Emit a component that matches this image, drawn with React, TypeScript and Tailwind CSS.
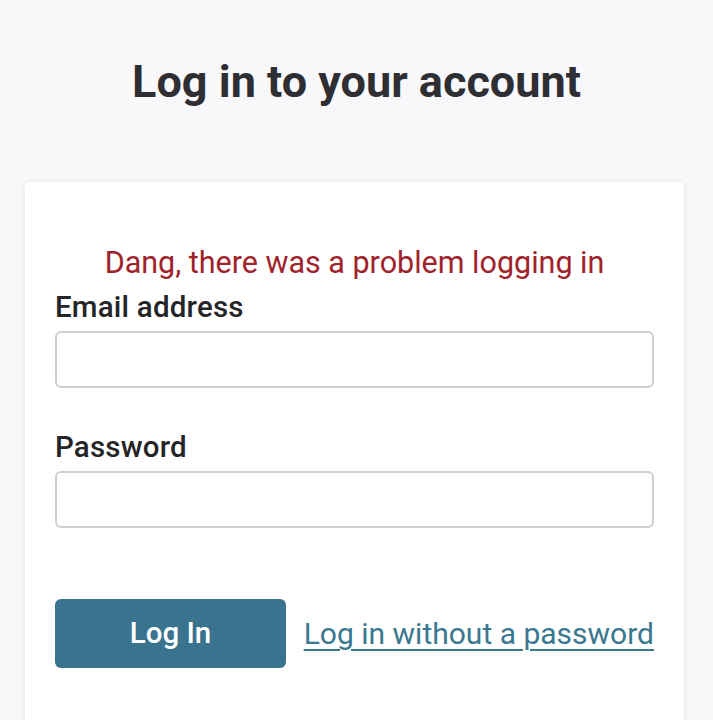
import { useState } from 'react';

export default function App() {
  const [email, setEmail] = useState('');
  const [password, setPassword] = useState('');

  return (
    <div className="min-h-screen bg-[#f8f8fb] font-['Roboto',_'Liberation_Sans',_sans-serif]">
      {/* Page title */}
      <h1 className="pt-[55px] text-center text-[45px] leading-[54px] font-bold text-[#2f2f33]">
        Log in to your account
      </h1>

      {/* Login card */}
      <div className="ml-[25px] mr-[29px] mt-[73px] bg-white rounded-[4px] shadow-[0_0_6px_rgba(0,0,0,0.08)] px-[30px] pt-[63px] pb-[60px]">
        <p className="text-center text-[30.5px] leading-[36px] text-[#a0232c]">
          Dang, there was a problem logging in
        </p>

        <form className="mt-[9px]" onSubmit={(e) => e.preventDefault()}>
          <label htmlFor="email" className="block text-[29.5px] leading-[34px] tracking-[0.2px] font-medium text-[#252528]">
            Email address
          </label>
          <input
            id="email"
            type="email"
            value={email}
            onChange={(e) => setEmail(e.target.value)}
            className="mt-[7px] block w-full h-[57px] rounded-[6px] border-2 border-[#cfcfcf] bg-white px-3 text-[26px] outline-none"
          />

          <label htmlFor="password" className="mt-[42px] block text-[29.5px] leading-[34px] tracking-[0.2px] font-medium text-[#252528]">
            Password
          </label>
          <input
            id="password"
            type="password"
            value={password}
            onChange={(e) => setPassword(e.target.value)}
            className="mt-[7px] block w-full h-[57px] rounded-[6px] border-2 border-[#cfcfcf] bg-white px-3 text-[26px] outline-none"
          />

          <div className="mt-[71px] flex items-center justify-between">
            <button
              type="submit"
              className="w-[231px] h-[69px] rounded-[6px] bg-[#39738e] text-white text-[29.5px] font-medium"
            >
              Log In
            </button>
            <a href="#" className="text-[30px] text-[#3a7891] underline underline-offset-[5px] decoration-[1.5px]">
              Log in without a password
            </a>
          </div>
        </form>
      </div>
    </div>
  );
}
